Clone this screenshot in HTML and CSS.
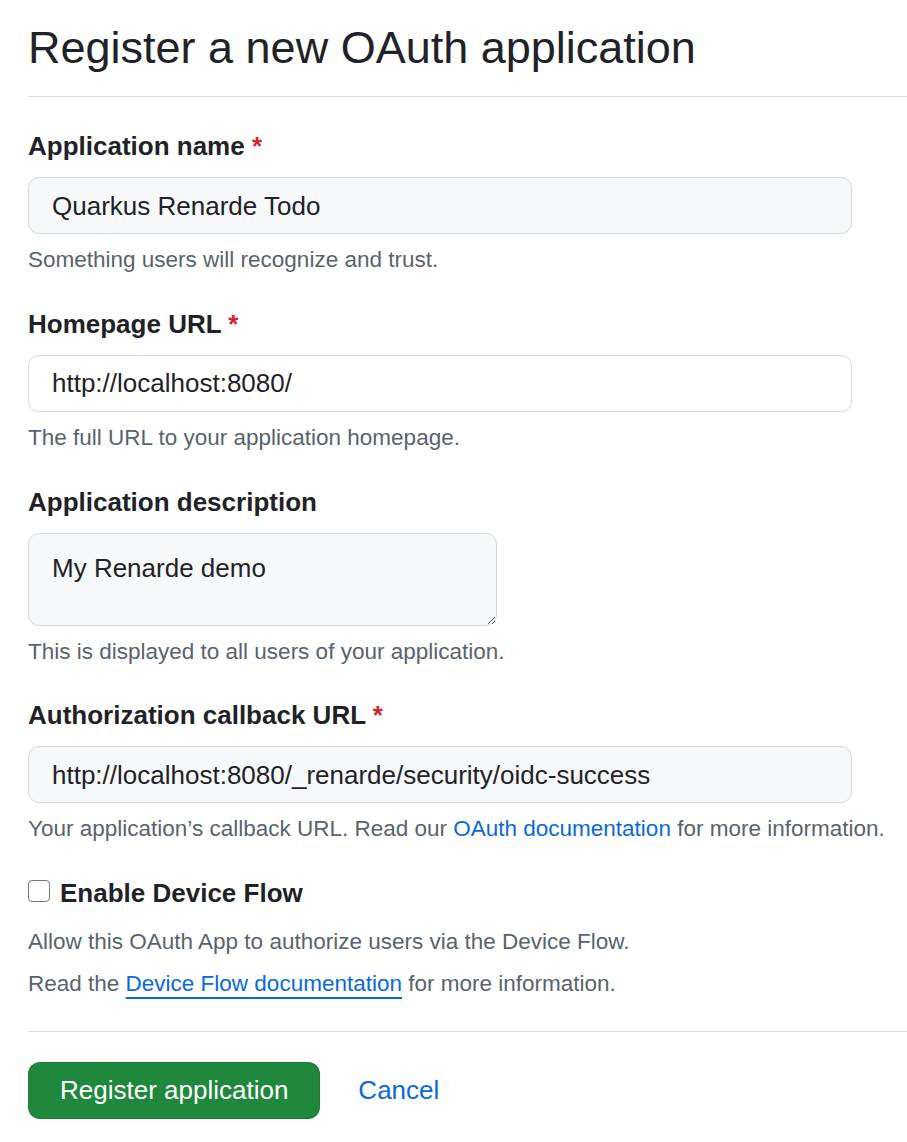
FILE: index.html
```html
<!DOCTYPE html>
<html lang="en">
<head>
  <meta charset="UTF-8" />
  <title>Register a new OAuth application</title>
  <link rel="stylesheet" href="styles.css">
</head>
<body>
  <div class="page">
    <!-- 見出し -->
    <div class="subhead">
      <h1 class="subhead-heading">Register a new OAuth application</h1>
    </div>

    <form class="oauth-form">
      <div class="form-group">
        <label class="form-label" for="appName">Application name <span class="required">*</span></label>
        <input class="form-control" type="text" id="appName" value="Quarkus Renarde Todo">
        <p class="note">Something users will recognize and trust.</p>
      </div>

      <div class="form-group">
        <label class="form-label" for="homepage">Homepage URL <span class="required">*</span></label>
        <input class="form-control is-white" type="text" id="homepage" value="http://localhost:8080/">
        <p class="note">The full URL to your application homepage.</p>
      </div>

      <div class="form-group">
        <label class="form-label" for="description">Application description</label>
        <textarea class="form-control textarea" id="description">My Renarde demo</textarea>
        <p class="note">This is displayed to all users of your application.</p>
      </div>

      <div class="form-group">
        <label class="form-label" for="callback">Authorization callback URL <span class="required">*</span></label>
        <input class="form-control" type="text" id="callback" value="http://localhost:8080/_renarde/security/oidc-success">
        <p class="note">Your application’s callback URL. Read our <a href="#" class="link">OAuth documentation</a> for more information.</p>
      </div>

      <!-- Device Flow -->
      <div class="form-group">
        <label class="checkbox-label">
          <input type="checkbox" class="checkbox">
          <span>Enable Device Flow</span>
        </label>
        <p class="note note-first">Allow this OAuth App to authorize users via the Device Flow.</p>
        <p class="note note-second">Read the <a href="#" class="link link-underline">Device Flow documentation</a> for more information.</p>
      </div>

      <div class="form-actions">
        <button type="button" class="btn-primary">Register application</button>
        <a href="#" class="cancel">Cancel</a>
      </div>
    </form>
  </div>
</body>
</html>
```

FILE: styles.css
```css
body {
  margin: 0;
  font-family: "Liberation Sans", Arial, sans-serif;
  color: #1f2328;
  background: #fff;
}
.page {
  padding-left: 28px;
  overflow: hidden;
}

/* 見出し */
.subhead {
  border-bottom: 1px solid #d8dee4;
  margin-bottom: 30px;
  padding: 20px 0 20px;
}
.subhead-heading {
  margin: 0;
  font-size: 45px;
  font-weight: 400;
  line-height: 56px;
}

/* フォーム */
.form-group {
  margin-bottom: 28px;
}
.form-label {
  display: block;
  font-size: 26px;
  font-weight: 700;
  line-height: 39px;
  margin-bottom: 11px;
}
.required {
  color: #d1242f;
}
.form-control {
  display: block;
  box-sizing: border-box;
  width: 824px;
  height: 57px;
  padding: 1px 23px 0;
  font-family: inherit;
  font-size: 26px;
  line-height: 37.5px;
  color: #1f2328;
  background: #f6f8fa;
  border: 1px solid #d1d9e0;
  border-radius: 11px;
  outline: none;
}
.form-control.is-white {
  background: #fff;
}
.textarea {
  width: 469px;
  height: 93px;
  padding: 16px 23px 0;
  resize: vertical;
}
.note {
  margin: 9px 0 0;
  font-size: 22.5px;
  line-height: 33.75px;
  color: #59636e;
}
.link {
  color: #0969da;
  text-decoration: none;
}
.link-underline {
  text-decoration: underline;
  text-decoration-thickness: 2px;
  text-underline-offset: 6px;
}

/* チェックボックス */
.checkbox-label {
  display: flex;
  align-items: flex-start;
  gap: 10px;
  font-size: 26px;
  font-weight: 700;
  line-height: 39px;
}
.checkbox {
  appearance: none;
  box-sizing: border-box;
  width: 22px;
  height: 22px;
  margin: 6px 0 0;
  border: 1.5px solid #767676;
  border-radius: 4px;
  background: #fff;
}
.note-first {
  margin-top: 12px;
}
.note-second {
  margin-top: 8px;
}

/* ボタン */
.form-actions {
  display: flex;
  align-items: center;
  gap: 38px;
  border-top: 1px solid #d8dee4;
  margin-top: 30px;
  padding-top: 30px;
}
.btn-primary {
  box-sizing: border-box;
  height: 57px;
  padding: 0 31px;
  font-family: inherit;
  font-size: 26px;
  color: #fff;
  background: #1f883d;
  border: 1px solid rgba(31, 35, 40, 0.15);
  border-radius: 12px;
  cursor: pointer;
}
.cancel {
  font-size: 26px;
  color: #0969da;
  text-decoration: none;
}
```
